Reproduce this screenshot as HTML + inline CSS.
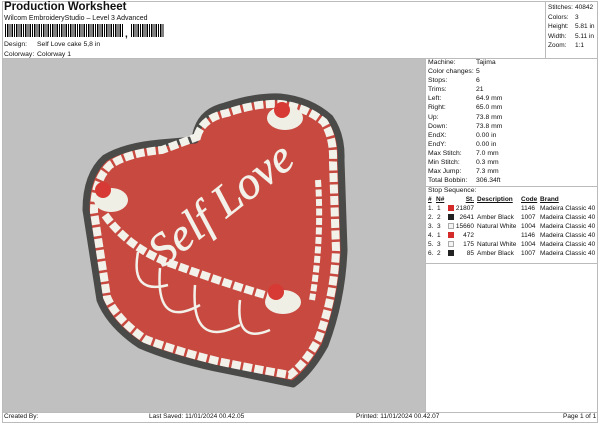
<!DOCTYPE html>
<html><head><style>
body{margin:0;width:600px;height:424px;background:#fff;font-family:"Liberation Sans",sans-serif;font-size:6.8px;color:#111;position:relative;overflow:hidden}
.a{position:absolute;white-space:nowrap}
.line{position:absolute;background:#bbb}
.bc{position:absolute;height:13px;top:24px;background:repeating-linear-gradient(90deg,#000 0 1px,#fff 1px 2px,#000 2px 3.5px,#fff 3.5px 4.5px)}
.sw{position:absolute;width:6px;height:6px}
.r{position:absolute;text-align:right;white-space:nowrap}
</style></head><body>
<div class="line" style="left:2px;top:1px;width:596px;height:1px"></div>
<div class="line" style="left:2px;top:1px;width:1px;height:421px"></div>
<div class="line" style="left:597px;top:1px;width:1px;height:421px"></div>
<div class="line" style="left:545px;top:1px;width:1px;height:57px"></div>
<div class="line" style="left:2px;top:58px;width:596px;height:1px"></div>
<div class="a" style="left:4px;top:1px;font-size:11.5px;font-weight:bold">Production Worksheet</div>
<div class="a" style="left:4px;top:15px;font-size:7px">Wilcom EmbroideryStudio – Level 3 Advanced</div>
<div class="bc" style="left:5px;width:119px"></div>
<div class="a" style="left:125px;top:29px;font-size:10px;font-weight:bold">,</div>
<div class="bc" style="left:131px;width:33px"></div>
<div class="a" style="left:4px;top:41px">Design:</div><div class="a" style="left:37px;top:41px">Self Love cake 5,8 in</div>
<div class="a" style="left:4px;top:51px">Colorway:</div><div class="a" style="left:37px;top:51px">Colorway 1</div>
<div class="a" style="left:548px;top:3px;line-height:9.6px;font-size:6.5px">Stitches:<br>Colors:<br>Height:<br>Width:<br>Zoom:</div>
<div class="a" style="left:575px;top:3px;line-height:9.6px;font-size:6.5px">40842<br>3<br>5.81 in<br>5.11 in<br>1:1</div>
<div style="position:absolute;left:3px;top:59px;width:422px;height:353px;background:#c0c0c0"></div>
<svg style="position:absolute;left:0;top:0" width="430" height="412">
<path d="M195,140 Q198,112 225,106 Q255,96 280,97 Q310,100 330,118 Q342,135 341,160 L344,250 Q342,300 325,345 Q310,372 293,384 Q250,375 215,368 Q170,358 140,345 Q110,325 100,300 L86,210 Q86,175 105,158 Q125,146 160,143 Z" fill="#c8493f" stroke="#4a4a48" stroke-width="7" stroke-linejoin="round"/>
<path d="M197,137 Q202,118 227,113 Q256,103 280,104 Q306,107 324,122 Q334,138 333,162 L336,250 Q334,298 318,340 Q305,364 290,375 Q250,368 217,361 Q173,350 145,339 Q117,320 107,297 L94,212 Q94,180 110,165 Q128,153 162,150 Z" fill="none" stroke="#f2f1ea" stroke-width="8" stroke-dasharray="9 2.5"/>
<path d="M105,215 Q130,250 175,265 Q230,285 275,298" fill="none" stroke="#f2f1ea" stroke-width="8" stroke-dasharray="9 2.5"/>
<path d="M318,180 Q322,240 312,300" fill="none" stroke="#f2f1ea" stroke-width="6" stroke-dasharray="7 2.5"/>
<path d="M138,252 Q130,295 168,285 M160,268 Q155,330 200,305 M195,285 Q190,350 240,325 M240,300 Q235,345 270,330" fill="none" stroke="#f2f1ea" stroke-width="2.5"/>
<ellipse cx="285" cy="118" rx="18" ry="12" fill="#f0efe6"/><circle cx="282" cy="110" r="8" fill="#d73a34"/>
<ellipse cx="111" cy="200" rx="17" ry="12" fill="#f0efe6"/><circle cx="103" cy="190" r="8" fill="#d73a34"/>
<ellipse cx="283" cy="302" rx="18" ry="12" fill="#f0efe6"/><circle cx="276" cy="292" r="8" fill="#d73a34"/>
<text x="0" y="0" transform="translate(163,268) rotate(-38)" font-family="Liberation Serif,serif" font-style="italic" font-size="46" fill="#f2f1ea" stroke="#f2f1ea" stroke-width="0.5">Self Love</text>
</svg>
<div class="a" style="left:428px;top:58px;line-height:9.1px">Machine:<br>Color changes:<br>Stops:<br>Trims:<br>Left:<br>Right:<br>Up:<br>Down:<br>EndX:<br>EndY:<br>Max Stitch:<br>Min Stitch:<br>Max Jump:<br>Total Bobbin:</div>
<div class="a" style="left:476px;top:58px;line-height:9.1px">Tajima<br>5<br>6<br>21<br>64.9 mm<br>65.0 mm<br>73.8 mm<br>73.8 mm<br>0.00 in<br>0.00 in<br>7.0 mm<br>0.3 mm<br>7.3 mm<br>306.34ft</div>
<div class="line" style="left:425px;top:59px;width:1px;height:353px"></div>
<div class="line" style="left:425px;top:186px;width:173px;height:1px"></div>
<div class="a" style="left:428px;top:187px">Stop Sequence:</div>
<div style="position:absolute;left:0;top:195px;font-size:6.5px;line-height:9px">
<div class="a" style="left:428px;font-weight:bold;text-decoration:underline">#</div>
<div class="a" style="left:436px;font-weight:bold;text-decoration:underline">N#</div>
<div class="r" style="left:440px;width:34px;font-weight:bold;text-decoration:underline">St.</div>
<div class="a" style="left:477px;font-weight:bold;text-decoration:underline">Description</div>
<div class="a" style="left:521px;font-weight:bold;text-decoration:underline">Code</div>
<div class="a" style="left:540px;font-weight:bold;text-decoration:underline">Brand</div>
<div class="a" style="left:428px;top:9px;line-height:9.1px">1.<br>2.<br>3.<br>4.<br>5.<br>6.</div>
<div class="a" style="left:437px;top:9px;line-height:9.1px">1<br>2<br>3<br>1<br>3<br>2</div>
<div class="sw" style="left:448px;top:10px;background:#d42a2a"></div>
<div class="sw" style="left:448px;top:19px;background:#222"></div>
<div class="sw" style="left:448px;top:28px;background:#f4f4f4;border:1px solid #aaa;width:4px;height:4px"></div>
<div class="sw" style="left:448px;top:37px;background:#d42a2a"></div>
<div class="sw" style="left:448px;top:46px;background:#f4f4f4;border:1px solid #aaa;width:4px;height:4px"></div>
<div class="sw" style="left:448px;top:55px;background:#222"></div>
<div class="r" style="left:445px;width:29px;top:9px;line-height:9.1px">21807<br>2641<br>15660<br>472<br>175<br>85</div>
<div class="a" style="left:477px;top:9px;line-height:9.1px">&nbsp;<br>Amber Black<br>Natural White<br>&nbsp;<br>Natural White<br>Amber Black</div>
<div class="a" style="left:521px;top:9px;line-height:9.1px">1146<br>1007<br>1004<br>1146<br>1004<br>1007</div>
<div class="a" style="left:540px;top:9px;line-height:9.1px">Madeira Classic 40<br>Madeira Classic 40<br>Madeira Classic 40<br>Madeira Classic 40<br>Madeira Classic 40<br>Madeira Classic 40</div>
</div>
<div class="line" style="left:425px;top:263px;width:173px;height:1px"></div>
<div class="line" style="left:2px;top:412px;width:596px;height:1px"></div>
<div class="line" style="left:2px;top:422px;width:596px;height:1px"></div>
<div class="a" style="left:4px;top:413px;font-size:6.5px">Created By:</div>
<div class="a" style="left:149px;top:413px;font-size:6.5px">Last Saved: 11/01/2024 00.42.05</div>
<div class="a" style="left:356px;top:413px;font-size:6.5px">Printed: 11/01/2024 00.42.07</div>
<div class="a" style="left:563px;top:413px;font-size:6.5px">Page 1 of 1</div>
</body></html>
